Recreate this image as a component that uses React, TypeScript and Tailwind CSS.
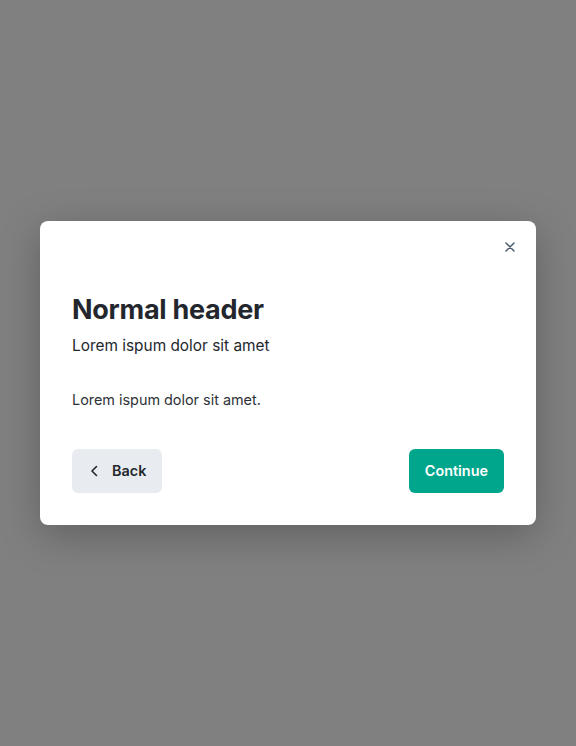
import React from 'react';

const App: React.FC = () => {
    return (
        <div className="min-h-screen w-full bg-[#808080] flex items-center justify-center font-['Inter',sans-serif]">
            <div className="relative w-[496px] bg-white rounded-lg shadow-[0_10px_40px_rgba(0,0,0,0.25)] px-8 pt-[72px] pb-8">
                {/* Close */}
                <button className="absolute top-[10px] right-[10px] w-8 h-8 flex items-center justify-center text-[#4b5a6e]">
                    <svg width="10" height="10" viewBox="0 0 10 10" fill="none" stroke="currentColor" strokeWidth="1.5" strokeLinecap="round">
                        <path d="M1 1L9 9M9 1L1 9" />
                    </svg>
                </button>

                <h2 className="text-[27px] leading-[34px] font-bold text-[#23272d] tracking-[-0.01em]">Normal header</h2>
                <p className="mt-[7px] text-[15.4px] leading-6 text-[#23272d]">Lorem ispum dolor sit amet</p>

                <p className="mt-[30px] text-[14.4px] leading-6 text-[#2d3238]">Lorem ispum dolor sit amet.</p>

                <div className="mt-[37px] flex items-center justify-between">
                    <button className="h-[44px] pl-4 pr-4 rounded-md bg-[#e8ecf0] flex items-center gap-3 text-[14.4px] font-semibold text-[#23272d]">
                        <svg width="12" height="12" viewBox="0 0 12 12" fill="none" stroke="currentColor" strokeWidth="1.6" strokeLinecap="round" strokeLinejoin="round">
                            <path d="M8.5 1.5L4 6L8.5 10.5" />
                        </svg>
                        Back
                    </button>
                    <button className="h-[44px] px-4 rounded-md bg-[#00a68b] text-white text-[14.4px] font-semibold">
                        Continue
                    </button>
                </div>
            </div>
        </div>
    );
};

export default App;
